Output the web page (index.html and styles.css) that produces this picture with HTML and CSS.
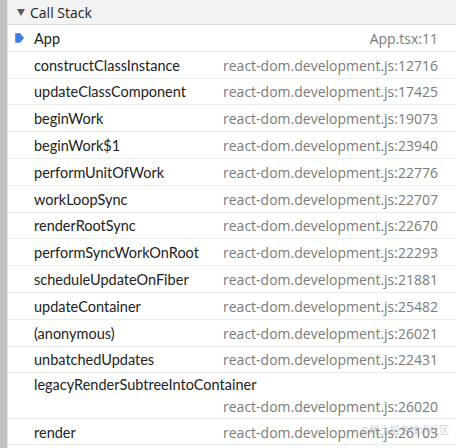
FILE: index.html
```html
<!DOCTYPE html>
<html>
<head>
<meta charset="utf-8">
<link rel="stylesheet" href="styles.css">
</head>
<body>
<div class="pane">
  <div class="gutter"></div>
  <div class="main">
    <div class="header">
      <span class="tri"></span>
      <span class="title">Call Stack</span>
    </div>
    <div class="list">
      <div class="row current">
        <svg class="arrow" width="9" height="10" viewBox="0 0 9 10"><path d="M0.5 0.5 H5 L8.7 5 L5 9.5 H0.5 Z" fill="#3f7ee8" stroke="#3f7ee8" stroke-width="0.6" stroke-linejoin="round"/></svg>
        <span class="fn">App</span><span class="file">App.tsx:11</span>
      </div>
      <div class="row"><span class="fn">constructClassInstance</span><span class="file">react-dom.development.js:12716</span></div>
      <div class="row"><span class="fn">updateClassComponent</span><span class="file">react-dom.development.js:17425</span></div>
      <div class="row"><span class="fn">beginWork</span><span class="file">react-dom.development.js:19073</span></div>
      <div class="row"><span class="fn">beginWork$1</span><span class="file">react-dom.development.js:23940</span></div>
      <div class="row"><span class="fn">performUnitOfWork</span><span class="file">react-dom.development.js:22776</span></div>
      <div class="row"><span class="fn">workLoopSync</span><span class="file">react-dom.development.js:22707</span></div>
      <div class="row"><span class="fn">renderRootSync</span><span class="file">react-dom.development.js:22670</span></div>
      <div class="row"><span class="fn">performSyncWorkOnRoot</span><span class="file">react-dom.development.js:22293</span></div>
      <div class="row"><span class="fn">scheduleUpdateOnFiber</span><span class="file">react-dom.development.js:21881</span></div>
      <div class="row"><span class="fn">updateContainer</span><span class="file">react-dom.development.js:25482</span></div>
      <div class="row"><span class="fn">(anonymous)</span><span class="file">react-dom.development.js:26021</span></div>
      <div class="row"><span class="fn">unbatchedUpdates</span><span class="file">react-dom.development.js:22431</span></div>
      <div class="row wrap"><span class="fn">legacyRenderSubtreeIntoContainer</span><span class="file">react-dom.development.js:26020</span></div>
      <div class="row"><span class="fn">render</span><span class="file">react-dom.development.js:26103</span></div>
    </div>
  </div>
  <div class="watermark">@稀土掘金技术社区</div>
</div>
</body>
</html>
```

FILE: styles.css
```css
html, body {
  margin: 0;
  padding: 0;
  background: #ffffff;
}
body {
  width: 456px;
  height: 448px;
  overflow: hidden;
  font-family: "Open Sans", "Noto Sans", sans-serif;
  font-size: 14px;
}
.pane {
  position: relative;
  display: flex;
  height: 448px;
}
.gutter {
  width: 7px;
  flex: none;
  background: #c2c2c2;
  border-right: 1px solid #e6e6e6;
}
.main {
  flex: 1;
  min-width: 0;
}
.header {
  height: 24px;
  background: #f3f3f3;
  border-bottom: 1px solid #dcdcdc;
  display: flex;
  align-items: center;
}
.tri {
  width: 0;
  height: 0;
  margin-left: 9px;
  border-left: 4px solid transparent;
  border-right: 4px solid transparent;
  border-top: 7px solid #595959;
}
.title {
  margin-left: 5px;
  font-size: 14px;
  color: #222;
}
.row {
  position: relative;
  display: flex;
  flex-wrap: wrap;
  align-items: center;
  min-height: 25.8px;
  line-height: 20px;
  padding: 0 18px 0 26px;
  border-bottom: 1px solid #ececec;
  box-sizing: content-box;
}
.row.wrap {
  padding-top: 0;
  padding-bottom: 0.3px;
}
.arrow {
  position: absolute;
  left: 7px;
  top: 8px;
}
.fn {
  font-family: "Lato", sans-serif;
  font-size: 14.5px;
  color: #222;
  white-space: nowrap;
  margin-right: 12px;
  padding-top: 2px;
}
.file {
  color: #7a7a7a;
  margin-left: auto;
  white-space: nowrap;
  padding-top: 2px;
}
.watermark {
  position: absolute;
  left: 360px;
  top: 424px;
  white-space: nowrap;
  font-family: "Noto Sans CJK SC", sans-serif;
  font-size: 10px;
  line-height: 12px;
  color: rgba(140,140,140,0.45);
}
```
